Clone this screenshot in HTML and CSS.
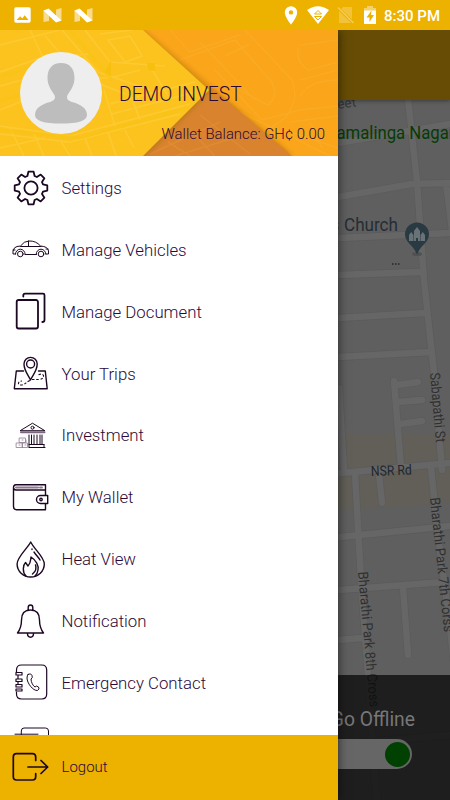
FILE: index.html
```html
<!DOCTYPE html>
<html lang="en">
<head>
<meta charset="UTF-8">
<meta name="viewport" content="width=device-width, initial-scale=1.0">
<title>Driver Menu</title>
<link rel="stylesheet" href="styles.css">
</head>
<body>
<div class="screen">

  <!-- Status bar -->
  <header class="statusbar">
    <div class="status-left">
      <svg width="17" height="17" viewBox="0 0 17 17"><path fill="#fff" fill-rule="evenodd" d="M2 .3h13a1.7 1.7 0 0 1 1.7 1.7v12a1.7 1.7 0 0 1-1.7 1.7H2A1.7 1.7 0 0 1 .3 14V2A1.7 1.7 0 0 1 2 .3zM2.500 13h12l-3.800-4.700-2.500 3.200-2-2.300z"/></svg>
      <svg width="19" height="15" viewBox="0 0 19 15"><path fill="#f8dc8c" d="M.5 2.500 6 1v12L.5 14zM13 1.500 18.500 0v12.500L13 14z"/><path fill="#fff" d="M.5 2.500 5.500.5 18.500 12.500 13 14.500z"/></svg>
      <svg width="19" height="15" viewBox="0 0 19 15"><path fill="#f8dc8c" d="M.5 2.500 6 1v12L.5 14zM13 1.500 18.500 0v12.500L13 14z"/><path fill="#fff" d="M.5 2.500 5.500.5 18.500 12.500 13 14.500z"/></svg>
    </div>
    <div class="status-right">
      <svg width="14" height="19" viewBox="0 0 14 19"><path fill="#fff" fill-rule="evenodd" d="M7 .2a6.200 6.200 0 0 1 6.200 6.200C13.200 11 7 18.500 7 18.500S.8 11 .8 6.400A6.200 6.200 0 0 1 7 .2zM7 4.200a2.200 2.200 0 1 0 0 4.400 2.200 2.200 0 0 0 0-4.400z"/></svg>
      <svg width="22" height="18" viewBox="0 0 22 18"><path fill="#fff" d="M0 4Q11-3.600 22 4L11 18z"/><path fill="none" stroke="#edb100" d="M7.500 8 11 4.500 14.500 8zM7.500 10.500h7L11 14z"/></svg>
      <svg width="18" height="18" viewBox="0 0 18 18"><path fill="#f1c23a" d="M6 1h9v16H2V5z"/><path d="M0 1 17 17.500" stroke="#edb100" stroke-width="3"/><path d="M1 1.500 16.500 17" stroke="#f4cd60" stroke-width="1.300"/></svg>
      <svg width="12" height="18" viewBox="0 0 12 18"><path fill="#f5d16b" d="M0 2h3V0h6v2h3v4H0z"/><path fill="#fff" d="M0 4.500h12V18H0z"/><path fill="#edb100" d="M7.500 4.500 2.500 11.500h3v4.500l4.500-7h-3z"/></svg>
      <span class="clock">8:30 PM</span>
    </div>
  </header>

  <div class="stage">

    <!-- Home screen under the menu -->
    <main class="home">
      <div class="toolbar"></div>
      <svg class="map" viewBox="0 100 450 700">
        <path fill="#615f57" d="M345 434H450V503L360 509H338V477L345 466z"/>
        <path id="roads" class="road-edge" d="M408 98 417 182 424 280 434 373 442 470M338 143 450 124M338 197 412 184 450 183M446 183 452 230M338 238 450 233M338 275 420 272M338 318 424 313M338 357 431 352M394 381 401 467M397 385 418 382M398 402 422 400M400 424 422 421M339 388 344 472M330 474 450 463M355 474 361 580 377 800M379 474 382 503M431 467 437 527 448 612 456 680M330 538 450 526M338 590 445 582M403 587 408 655M338 640 362 638M338 745 450 735"/>
        <path class="road" d="M408 98 417 182 424 280 434 373 442 470M338 143 450 124M338 197 412 184 450 183M446 183 452 230M338 238 450 233M338 275 420 272M338 318 424 313M338 357 431 352M394 381 401 467M397 385 418 382M398 402 422 400M400 424 422 421M339 388 344 472M330 474 450 463M355 474 361 580 377 800M379 474 382 503M431 467 437 527 448 612 456 680M330 538 450 526M338 590 445 582M403 587 408 655M338 640 362 638M338 745 450 735"/>
        <g class="map-labels">
          <text x="338" y="109" transform="rotate(-8 338 109)" font-size="13.5" fill="#373737">eet</text>
          <text x="336.500" y="139" font-size="18" fill="#053c05" textLength="118" lengthAdjust="spacingAndGlyphs">amalinga Nagar</text>
          <text x="344" y="231" font-size="18.5" fill="#252d34" textLength="54" lengthAdjust="spacingAndGlyphs">Church</text>
          <text x="330" y="231" font-size="18" fill="#252d34">s</text>
          <text x="371" y="476" transform="rotate(-2 371 476)" font-size="14" fill="#20262b" textLength="41" lengthAdjust="spacingAndGlyphs">NSR Rd</text>
          <text x="430" y="373" transform="rotate(85 430 373)" textLength="70" lengthAdjust="spacingAndGlyphs">Sabapathi St</text>
          <text x="430" y="498" transform="rotate(84 430 498)" textLength="135" lengthAdjust="spacingAndGlyphs">Bharathi Park 7th Corss</text>
          <text x="358" y="572" transform="rotate(85 358 572)" textLength="136" lengthAdjust="spacingAndGlyphs">Bharathi Park 8th Cross</text>
        </g>
        <ellipse cx="417" cy="254" rx="5" ry="2" fill="#505252"/>
        <path fill="#293a42" d="M417 222.500a12 12 0 0 1 12 12c0 8-9 11-12 20-3-9-12-12-12-20a12 12 0 0 1 12-12z"/>
        <path fill="#697377" d="M409 241v-6l2.200-3 2.300 3v6zM420.500 241v-6l2.300-3 2.200 3v6zM414 241v-10l3-4 3 4v10h-2v-3h-2v3z"/>
        <path d="M392 264h8" stroke="#20262b" stroke-width="1.500" stroke-dasharray="1.500 1.500"/>
      </svg>
      <div class="offline-panel">
        <span class="offline-label">Go Offline</span>
        <span class="switch"><span class="knob"></span></span>
      </div>
    </main>

    <!-- Side menu -->
    <aside class="drawer">
      <div class="profile">
        <svg class="profile-bg" viewBox="0 0 338 126">
          <defs>
            <filter id="soft" x="-10%" y="-10%" width="120%" height="120%"><feGaussianBlur stdDeviation="2.500"/></filter>
          </defs>
          <rect width="338" height="126" fill="#faa51a"/>
          <g fill="none" stroke="#fbae28" stroke-width="1.500" opacity=".7">
            <path d="M170 0 190 22 240 5M180 30 235 10 270 50Q280 65 268 75L230 55M215 40 262 90 300 80 338 76M245 0 292 50Q300 70 285 88L270 98M300 15 338 10M298 18Q296 32 308 40L338 32M300 50 338 40M300 66Q310 50 338 50M290 92 338 86M285 100 338 118M310 92 322 118M240 82 330 126M250 14 225 26M200 12 255 70"/>
          </g>
          <path d="M143 0 292 126H143L212 60z" fill="#6a3a08" opacity=".45" filter="url(#soft)"/>
          <path d="M212 58 292 126H140z" fill="#d9832e"/>
          <path d="M150 124 220 92M175 126 240 106M190 100 215 126M200 85 250 124M168 112 190 126" fill="none" stroke="#de8b33" stroke-width="1.500"/>
          <path d="M0-5H138L211 60 141 131H0z" fill="#9a6a08" opacity=".45" filter="url(#soft)"/>
          <path d="M0 0H143L209 60 143 126H0z" fill="#fcc31e"/>
          <g fill="none" stroke="#fdca32" stroke-width="1.500">
            <path d="M0 15 60 0M0 42 40 28 90 24M30 0 44 30M45 6 80 46 125 64M62 0 98 42 150 60M85 0 110 32 165 36M100 4 132 0M108 10 125 32 142 26 130 6zM0 80 20 72M0 96 70 106 190 74M0 104 70 112 180 84M0 118 45 108M10 98 24 126M34 104 44 126M60 110 70 126M85 108 92 126M108 102 116 126M125 100 134 118M104 60 115 96M128 58 140 90M110 74 195 52M112 84 195 62M150 36 168 66M0 56 22 50M88 50 118 46 140 40"/>
          </g>
          <path d="M0 70 24 64M0 100 80 108 188 78M70 0 112 50M0 47 38 34" fill="none" stroke="#f7c313" stroke-width="3" opacity=".6"/>
          <path d="M147 33h8v8l-7-1zM105 42l6-12v16z" fill="#f7bf0e"/>
        </svg>
        <svg class="avatar" viewBox="0 0 82 82">
          <circle cx="41" cy="41" r="41" fill="#eee"/>
          <path fill="#bdbdbd" d="M41 11C50 11 54.500 17 54.500 26 54.500 34 50 39 47.500 43 46 47 48 48.500 52 50 60 52 67 56 67 63 67 69 58 71.500 41 71.500S15 69 15 63C15 56 22 52 30 50 34 48.500 36 47 34.500 43 32 39 27.500 34 27.500 26 27.500 17 32 11 41 11z"/>
        </svg>
        <div class="profile-text">
          <div class="name">DEMO INVEST</div>
          <div class="balance">Wallet Balance: GH¢ 0.00</div>
        </div>
      </div>

      <nav class="menu">
        <a class="item">
          <svg class="icon bold" viewBox="-19 -19 38 38"><path d="M-3.600-12-2.600-16.300H2.600L3.600-12 5.900-11 9.700-13.400 13.400-9.700 11-5.900 12-3.600 16.300-2.600V2.600L12 3.600 11 5.900 13.400 9.700 9.700 13.400 5.900 11 3.600 12 2.600 16.300H-2.600L-3.600 12-5.900 11-9.700 13.400-13.400 9.700-11 5.900-12 3.600-16.300 2.600V-2.600L-12-3.600-11-5.900-13.400-9.700-9.700-13.400-5.900-11z"/><circle r="6.600"/></svg>
          <span>Settings</span>
        </a>
        <a class="item">
          <svg class="icon thin" viewBox="-19 -19 38 38"><path d="M-15.500 5H-18V2Q-17-2-14-2.500L-10.500-3Q-7-8-2-8 5-8.300 9.500-3 17-2.500 17.500 2V5H15M-6 5.500H5.500M-10.500-2.500H10M-2.500-8v5.500M-15.500 5a4.800 4.800 0 0 1 9.600 0M5.200 5a4.800 4.800 0 0 1 9.600 0M-18 1h2M15 0h2"/><circle cx="-10.700" cy="5" r="2.800"/><circle cx="10" cy="5" r="2.800"/></svg>
          <span>Manage Vehicles</span>
        </a>
        <a class="item">
          <svg class="icon bold" viewBox="-19 -19 38 38"><rect x="-14.300" y="-11" width="21.300" height="28.500" rx="2"/><path d="M-7.700-14.500v-1q0-1.800 1.800-1.800H12q1.500 0 1.500 1.500V9q0 2-2.200 2"/></svg>
          <span>Manage Document</span>
        </a>
        <a class="item">
          <svg class="icon" viewBox="-19 -19 38 38"><path d="M-.5 7C-2 3-7-2-7-9a6.600 6.600 0 0 1 13.200 0C6.200-2 1 3-.5 7z"/><circle cx="-.4" cy="-9" r="4"/><path d="M-7.500-2H-14.700L-16.700 15.700H16.200L14.300-2H7.500"/><path stroke-width="1.100" stroke-linecap="butt" stroke-dasharray="2.500 1.700" d="M-1 7.500C-5 9-6 12-10 12-14 12-13 8-9 8M1 6.500H8Q13 6 12.500 2.500 11 0 7 2"/></svg>
          <span>Your Trips</span>
        </a>
        <a class="item">
          <svg class="icon thin" viewBox="-19 -19 38 38"><path d="M-10.500-4.500 1.500-11.800 13.500-4.500zM-2 9.500H13M-2 12.500H14M13 9.500v3M-2 0v12"/><circle cx="1.500" cy="-7.300" r="1.500"/><path stroke="#7c657f" stroke-width="2" d="M-10-2.800H13.500"/><path d="M.5 0V9M3 0V9M6 0V9M9 0V9M11 0V9"/><path stroke="#8f7c92" stroke-width=".8" d="M-14.500 8h6v4.500h-6zM-8.500 8h5v4.500h-5zM-11.500 3h6v4.500h-6zM-9 5h1M-12 10h1M-6 10h1M-5 5v2"/></svg>
          <span>Investment</span>
        </a>
        <a class="item">
          <svg class="icon" viewBox="-19 -19 38 38"><path d="M14.500-1.500V-12.200H-15Q-17.500-12-17.500-9.500V9.500Q-17.500 12.700-14.500 12.700H14.500V6.500M-17.500-9Q-17-7-15-7H14.500M16.700-1.500H9.500a4 4 0 0 0 0 8h7.200z"/><circle cx="10" cy="2.500" r="1.200"/><path stroke="#8d7b8f" stroke-width="2" d="M-15-9.600H7M9-9.600h2"/></svg>
          <span>My Wallet</span>
        </a>
        <a class="item">
          <svg class="icon" viewBox="-19 -19 38 38"><path d="M-.3-17C3-10 13.300-2 13.300 5A13.600 13 0 0 1-13.900 5C-13.900-2-4-10-.3-17z"/><path d="M-5 17C-9 13-8 6-5.500 3.500L-3 7C0 4-.5 1 0-2 5 1 8 7 7 11Q6.500 15 4 17M4.500 6C6 10 4 13 1.500 15M3-7C5-4 8-1 9 1M1-10v.5"/></svg>
          <span>Heat View</span>
        </a>
        <a class="item">
          <svg class="icon" viewBox="-19 -19 38 38"><path d="M-2.800-10.500V-13.500Q-2.800-16-.5-16T1.800-13.500V-10.500M-13.500 12C-10.500 8-9.500 5-9.500-1-9.500-8-6-11-.5-11S8.500-8 8.500-1C8.500 5 9.500 8 12.500 12zM-3.500 12.500Q-3.500 16.200-.5 16.200T2.500 12.500"/></svg>
          <span>Notification</span>
        </a>
        <a class="item">
          <svg class="icon thin" viewBox="-19 -19 38 38"><path stroke-width="1.200" d="M-14.500-9.500V-12Q-14.500-17-9.500-17H10.700Q15.700-17 15.700-12V12Q15.700 17 10.700 17H-9.500Q-14.500 17-14.500 12V10"/><path stroke-width="1.200" d="M-15-9.500h6v2.500h-6zM-15-3h6v2.500h-6zM-15 2.500h6V5h-6zM-15 7h6v2h-6zM-13-6.500v3M-13-.5v3"/><path d="M-3-7.500Q0-9 1-6.500 2-4 0-3C0 0 2 4 4 5Q5.500 3 7.500 5 9 7 6.500 8.500C2 9-4 1-4-4Q-4-6.500-3-7.500z"/></svg>
          <span>Emergency Contact</span>
        </a>
        <a class="item">
          <svg class="icon thin" viewBox="-19 -19 38 38"><path d="M-9.700-9V-13Q-9.700-16-7-16H14.500Q17.500-16 17.500-13V12H-9.700zM-16-9.800H7"/></svg>
        </a>
      </nav>

      <a class="logout">
        <svg class="icon" viewBox="-19 -19 38 38"><path stroke-width="1.700" d="M4.700-6.500V-10Q4.700-13.300 1.500-13.300H-14.500Q-17.700-13.300-17.700-10V9.500Q-17.700 13-14.500 13H1.500Q4.700 13 4.700 9.500V6.500M-3 0H16.500M10-6.500 16.700 0 10 6.500"/></svg>
        <span>Logout</span>
      </a>
    </aside>
  </div>
</div>
</body>
</html>
```
FILE: styles.css
```css
body {
  margin: 0;
  padding: 0;
  font-family: Roboto, "Liberation Sans", sans-serif;
}

.screen {
  width: 450px;
  height: 800px;
  display: flex;
  flex-direction: column;
  overflow: hidden;
}

.statusbar {
  height: 30px;
  background-color: #edb100;
  display: flex;
  justify-content: space-between;
  align-items: center;
  padding: 0 10px 0 14px;
  box-sizing: border-box;
}

.status-left, .status-right {
  display: flex;
  align-items: center;
}

.status-left {
  gap: 12px;
}

.status-right {
  gap: 8.5px;
}

.clock {
  color: #fff;
  font-size: 15px;
  line-height: 20px;
  font-weight: 500;
  white-space: nowrap;
  padding-top: 1px;
}

.stage {
  position: relative;
  flex: 1;
  overflow: hidden;
}

.home {
  height: 770px;
}

.toolbar {
  position: relative;
  height: 70px;
  background-color: #664c04;
  box-shadow: 0 1px 4px rgba(0, 0, 0, 0.4);
}

.map {
  display: block;
  width: 450px;
  height: 700px;
  background-color: #5f5f5f;
}

.road, .road-edge {
  fill: none;
  stroke: #666;
  stroke-width: 6.5;
  stroke-linecap: round;
  stroke-linejoin: round;
}

.road-edge {
  stroke: #5b5b5b;
  stroke-width: 7.8;
}

.map-labels {
  font-family: Roboto, "Liberation Sans", sans-serif;
  font-size: 14px;
  fill: #303030;
}

/* sits over the bottom of the map */
.offline-panel {
  position: absolute;
  right: 0;
  bottom: 0;
  width: 450px;
  height: 125px;
  box-sizing: border-box;
  padding: 33px 35px 0 0;
  background-color: rgba(8, 8, 8, 0.75);
  display: flex;
  flex-direction: column;
  align-items: flex-end;
}

.offline-label {
  color: #777;
  font-size: 19.3px;
  line-height: 24px;
}

.switch {
  width: 88px;
  height: 30px;
  margin: 7px 3px 0 0;
  padding: 2px;
  box-sizing: border-box;
  border-radius: 15px;
  background-color: #666;
  display: flex;
  justify-content: flex-end;
  align-items: center;
}

.knob {
  width: 25px;
  height: 25px;
  border-radius: 50%;
  background-color: #004000;
}

.drawer {
  position: absolute;
  top: 0;
  left: 0;
  width: 338px;
  height: 770px;
  background-color: #fff;
  display: flex;
  flex-direction: column;
  box-shadow: 0 0 10px rgba(0, 0, 0, 0.6);
}

.profile {
  position: relative;
  height: 126px;
  flex: none;
  display: flex;
  box-sizing: border-box;
  padding: 22px 13px 0 20px;
}

.profile-bg {
  position: absolute;
  top: 0;
  left: 0;
  width: 338px;
  height: 126px;
}

.avatar {
  position: relative;
  width: 82px;
  height: 82px;
  flex: none;
}

.profile-text {
  position: relative;
  flex: 1;
  color: #2b0a3a;
  font-weight: 300;
}

.name {
  margin: 31px 0 0 17px;
  font-size: 19.3px;
  line-height: 24px;
}

.balance {
  margin-top: 17px;
  font-size: 14.9px;
  line-height: 20px;
  text-align: right;
  white-space: nowrap;
}

.menu {
  flex: 1;
  min-height: 0;
  overflow: hidden;
  padding-top: 0.7px;
}

.item, .logout {
  display: flex;
  align-items: center;
  gap: 11.5px;
  padding-left: 12px;
  color: #2b0a3a;
  font-size: 16.8px;
  font-weight: 300;
}

.item {
  height: 61.85px;
}

.item span {
  padding-top: 1px;
}

.logout {
  height: 63.500px;
  padding-bottom: 1.500px;
  flex: none;
  background-color: #edb100;
  font-size: 15px;
}

.icon {
  width: 38px;
  height: 38px;
  flex: none;
  fill: none;
  stroke: #1c0722;
  stroke-width: 1.4;
  stroke-linecap: round;
  stroke-linejoin: round;
}

.bold {
  stroke-width: 1.8;
}

.thin {
  stroke-width: 1;
}
```
